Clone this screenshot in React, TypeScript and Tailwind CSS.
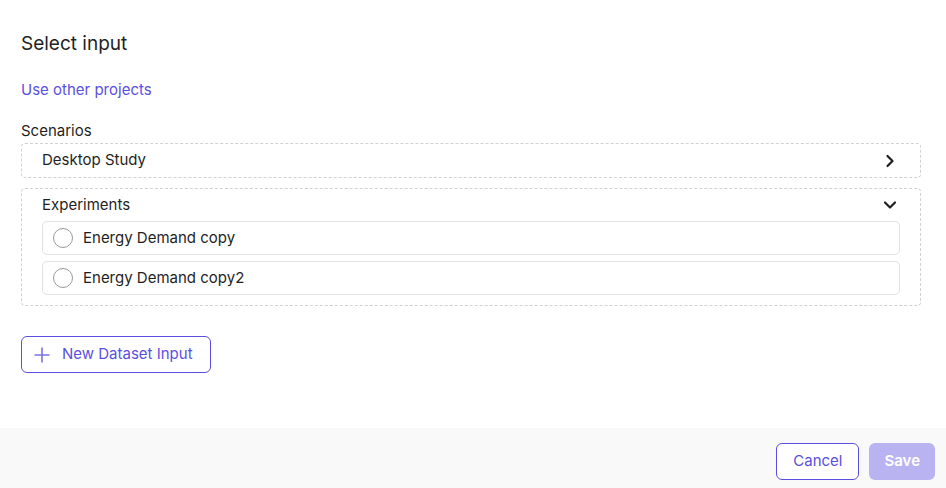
import { ChevronRight, ChevronDown } from "lucide-react";

const experiments = ["Energy Demand copy", "Energy Demand copy2"];

export default function App() {
  return (
    <div className="flex h-[488px] w-[946px] flex-col bg-white font-['Inter',sans-serif] text-[#1f1f1f]">
      <div className="flex-1 px-[21px] pt-[32px]">
        <h2 className="text-[19px] leading-[24px]">Select input</h2>

        <a className="mt-[24px] block text-[15px] leading-[20px] text-[#5a50e0]">
          Use other projects
        </a>

        <div className="mt-[21px] text-[15px] leading-[20px]">Scenarios</div>

        <div className="mt-[2px] flex h-[35px] w-[900px] items-center justify-between rounded-[4px] border border-dashed border-[#d2d2d2] pl-[20px] pr-[20px] text-[15px]">
          <span>Desktop Study</span>
          <ChevronRight className="h-[20px] w-[20px]" strokeWidth={2.6} />
        </div>

        <div className="mt-[10px] w-[900px] rounded-[4px] border border-dashed border-[#d2d2d2] px-[20px] pb-[10px] pt-[6px] text-[15px]">
          <div className="flex h-[20px] items-center justify-between">
            <span>Experiments</span>
            <ChevronDown className="h-[20px] w-[20px]" strokeWidth={2.6} />
          </div>
          <div className="mt-[6px] flex flex-col gap-[6px]">
            {experiments.map((name) => (
              <label
                key={name}
                className="flex h-[34px] items-center gap-[10px] rounded-[5px] border border-[#e2e2e2] px-[10px]"
              >
                <span className="h-[20px] w-[20px] rounded-full border border-[#9a9a9a]" />
                <span>{name}</span>
              </label>
            ))}
          </div>
        </div>

        <button className="mt-[30px] flex h-[37px] items-center gap-[12px] rounded-[6px] border border-[#5a50e0] pb-[1px] pl-[12px] pr-[17px] pt-[1px] text-[15px] text-[#5a50e0]">
          <svg width="16" height="16" viewBox="0 0 16 16" className="text-[#7a73e8]">
            <path d="M8 0.5V15.5M0.5 8H15.5" stroke="currentColor" strokeWidth="1.6" fill="none" />
          </svg>
          New Dataset Input
        </button>
      </div>

      <div className="flex h-[60px] items-start justify-end gap-[10px] bg-[#f9f9f9] pr-[11px] pt-[15px]">
        <button className="h-[37px] rounded-[6px] border border-[#5a50e0] bg-white px-[16px] text-[15px] text-[#5a50e0]">
          Cancel
        </button>
        <button className="h-[37px] rounded-[6px] bg-[#b9b4f1] px-[15px] text-[15px] font-semibold text-white">
          Save
        </button>
      </div>
    </div>
  );
}
